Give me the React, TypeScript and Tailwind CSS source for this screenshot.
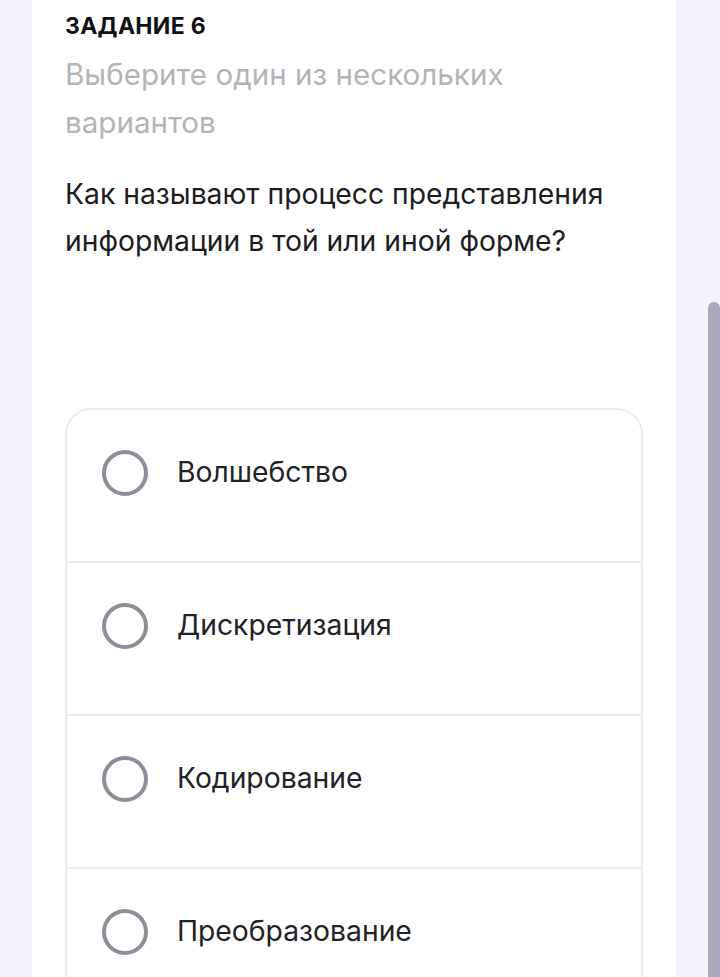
import type { FC } from "react";

const options = ["Волшебство", "Дискретизация", "Кодирование", "Преобразование"];

const OptionRow: FC<{ label: string; last?: boolean }> = ({ label, last }) => (
  <div
    className={
      "flex h-[153px] items-start gap-[29px] pl-[35px] pt-[40px] " +
      (last ? "" : "border-b-2 border-[#ebebef]")
    }
  >
    <span className="block h-[46px] w-[46px] shrink-0 rounded-full border-[4px] border-[#8e8e99]" />
    <span className="mt-[5px] text-[28.3px] leading-[34px] text-[#222227]">{label}</span>
  </div>
);

export default function App() {
  return (
    <div className="relative h-[977px] overflow-hidden bg-[#f3f3f8] font-['Inter',sans-serif]">
      <div className="ml-[32px] h-full w-[644px] bg-white pl-[33px] pr-[33px]">
        <div className="pt-[12px] text-[23px] font-bold leading-[28px] tracking-[0.3px] text-[#111114]">
          ЗАДАНИЕ 6
        </div>
        <div className="mt-[10px] w-[500px] text-[29.6px] leading-[48px] text-[#b3b3b8]">
          Выберите один из нескольких вариантов
        </div>
        <div className="mt-[25px] w-[560px] text-[28.3px] leading-[47px] text-[#1c1c21]">
          Как называют процесс представления информации в той или иной форме?
        </div>
        <div className="mt-[143px] h-[700px] overflow-hidden rounded-t-[26px] border-2 border-b-0 border-[#ebebef]">
          {options.map((o, i) => (
            <OptionRow key={o} label={o} last={i === options.length - 1} />
          ))}
        </div>
      </div>
      <div className="absolute right-0 top-[302px] h-[700px] w-[12px] rounded-t-full bg-[#a9a9b9]" />
    </div>
  );
}
